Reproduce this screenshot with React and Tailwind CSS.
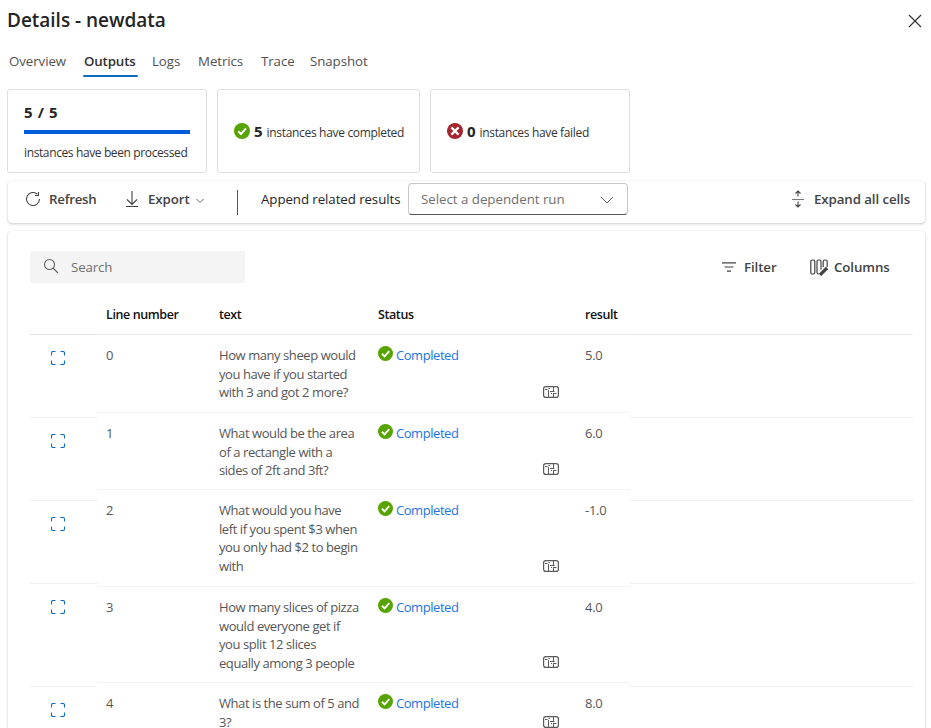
const FONT = "font-['Segoe_UI','Open_Sans','Noto_Sans',sans-serif]";

const tabs = [
  { label: 'Overview', cls: 'w-[59px]' },
  { label: 'Outputs', cls: 'w-[52px]', active: true },
  { label: 'Logs', cls: 'w-[30px]' },
  { label: 'Metrics', cls: 'w-[47px]' },
  { label: 'Trace', cls: 'w-[33px]' },
  { label: 'Snapshot', cls: 'w-[58px]' },
];

const rows = [
  { lines: ['How many sheep would', 'you have if you started', 'with 3 and got 2 more?'], result: '5.0', h: 'h-[78px]', side: 'h-[83px]' },
  { lines: ['What would be the area', 'of a rectangle with a', 'sides of 2ft and 3ft?'], result: '6.0', h: 'h-[77px]', side: 'h-[83px]' },
  { lines: ['What would you have', 'left if you spent $3 when', 'you only had $2 to begin', 'with'], result: '-1.0', h: 'h-[97px]', side: 'h-[83px]' },
  { lines: ['How many slices of pizza', 'would everyone get if', 'you split 12 slices', 'equally among 3 people'], result: '4.0', h: 'h-[96px]', side: 'h-[103px]' },
  { lines: ['What is the sum of 5 and', '3?'], result: '8.0', h: 'h-[60px]', side: 'h-[83px]' },
];

function Check({ className }) {
  return (
    <svg viewBox="0 0 16 16" className={`shrink-0 ${className}`}>
      <circle cx="8" cy="8" r="8" fill="#57a300" />
      <path d="M4.200 8.300 7 11l5-5.600" fill="none" stroke="#fff" strokeWidth="2" />
    </svg>
  );
}

function Failed() {
  return (
    <svg viewBox="0 0 16 16" className="size-4 shrink-0">
      <circle cx="8" cy="8" r="8" fill="#a4262c" />
      <path d="m4.400 4.400 7.200 7.200m0-7.200-7.200 7.200" stroke="#fff" strokeWidth="2.200" />
    </svg>
  );
}

function Corners() {
  return (
    <svg viewBox="0 0 14 14" className="size-[14px]" fill="none" stroke="#0f6cbd" strokeWidth="1.1">
      <path d="M.5 4.500V2Q.5.5 2 .5h2.500M9.500 .5H12q1.500 0 1.500 1.500v2.500M13.500 9.500V12q0 1.500-1.500 1.500H9.500M4.500 13.500H2Q.5 13.500 .5 12V9.500" />
    </svg>
  );
}

function TraceIcon() {
  return (
    <svg viewBox="0 0 16 12" className="h-3 w-4" fill="none" stroke="#5a5a5a" strokeWidth="1">
      <rect x=".6" y=".6" width="14.800" height="10.800" rx="2.200" strokeWidth="1.200" />
      <path d="M2 3.500h2.500M5.500 4v7M5.500 2.500H7M10.500 1v4M7 5.500h4.500M10.500 8v3M10 7.500h3.500M8 7.500h1" />
    </svg>
  );
}

function Completed() {
  return (
    <div className="flex pl-[15px] pt-[10px]">
      <Check className="mt-px size-[15px]" />
      <span className="ml-[3px] leading-5 tracking-[-0.45px] text-[#2474e5]">Completed</span>
    </div>
  );
}

export default function App() {
  return (
    <div className={`h-[728px] w-[931px] overflow-hidden bg-white text-[#242424] ${FONT}`}>
      <header className="flex h-[42px] justify-between pl-[7px] pr-[9px]">
        <h1 className="mt-[6px] text-[19px] font-semibold leading-7 tracking-[-0.02px]">Details - newdata</h1>
        <svg viewBox="0 0 14 14" className="mt-[14px] size-[14px]" stroke="#333" strokeWidth="1.2">
          <path d="m1 1 12 12m0-12L1 13" />
        </svg>
      </header>

      <nav className="flex h-[47px] gap-4 pl-[9px] text-[13.3px] text-[#505050]">
        {tabs.map((t) => (
          <div key={t.label} className={t.cls}>
            <div className={`mt-[9px] whitespace-nowrap leading-5 ${t.active ? 'font-semibold tracking-[-0.15px] text-[#303030]' : 'tracking-[-0.08px]'}`}>{t.label}</div>
            {t.active && <div className="-ml-px mt-[4px] h-[2px] w-[55px] rounded bg-[#0f6cbd]" />}
          </div>
        ))}
      </nav>

      <section className="flex h-[84px] gap-[10px] pl-[7px]">
        <div className="w-[200px] rounded-[3px] border border-[#dedede] px-4">
          <div className="mt-[12px] text-[15px] font-bold leading-5 tracking-[0.6px]">5 / 5</div>
          <div className="mt-[8px] h-1 w-[166px] bg-[#015cda]" />
          <div className="mt-[9px] whitespace-nowrap text-[12px] leading-5 tracking-[-0.38px] text-[#333]">instances have been processed</div>
        </div>
        <div className="flex w-[203px] items-center rounded-[3px] border border-[#dedede] px-4">
          <Check className="size-4" />
          <span className="ml-1 text-[15px] font-bold leading-5">5</span>
          <span className="ml-[4px] mt-[3px] whitespace-nowrap text-[12px] leading-5 tracking-[-0.32px] text-[#333]">instances have completed</span>
        </div>
        <div className="flex w-[200px] items-center rounded-[3px] border border-[#dedede] px-4">
          <Failed />
          <span className="ml-1 text-[15px] font-bold leading-5">0</span>
          <span className="ml-[4px] mt-[3px] whitespace-nowrap text-[12px] leading-5 tracking-[-0.34px] text-[#333]">instances have failed</span>
        </div>
      </section>

      <section className="ml-2 mt-2 flex h-[42px] w-[917px] items-start rounded-[4px] text-[13.3px] leading-5 shadow-[0_1px_3px_rgba(0,0,0,0.2),0_0_1px_rgba(0,0,0,0.12)]">
        <svg viewBox="0 0 16 16" className="ml-[17px] mt-[10px] size-4" fill="none" stroke="#424242" strokeWidth="1.1">
          <path d="M14.500 8A6.500 6.500 0 1 1 12.300 3.100M13.500 1v3.500H10" />
        </svg>
        <span className="ml-[8px] mt-[8px] w-[48px] whitespace-nowrap font-semibold tracking-[-0.25px] text-[#424242]">Refresh</span>
        <svg viewBox="0 0 14 16" className="ml-[28px] mt-[10px] h-4 w-[14px]" fill="none" stroke="#424242" strokeWidth="1.1">
          <path d="M7 0v13M2 8.500l5 5 5-5M1 15.500h12" />
        </svg>
        <span className="ml-[9px] mt-[8px] w-[43px] whitespace-nowrap font-semibold tracking-[-0.1px] text-[#424242]">Export</span>
        <svg viewBox="0 0 8 6" className="ml-[5px] mt-[17px] h-[6px] w-2" fill="none" stroke="#616161" strokeWidth="1">
          <path d="m.5 1 3.500 3.500L7.500 1" />
        </svg>
        <div className="ml-[33px] mt-[9px] h-[25px] w-px bg-[#555]" />
        <span className="ml-[23px] mt-[8px] w-[139px] whitespace-nowrap tracking-[-0.08px]">Append related results</span>
        <div className="ml-[8px] mt-[2px] flex h-8 w-[220px] justify-between rounded-[4px] border border-[#c9c9c9] border-b-[#555] pl-3 pr-[13px]">
          <span className="mt-[5px] whitespace-nowrap tracking-[-0.02px] text-[#707070]">Select a dependent run</span>
          <svg viewBox="0 0 14 8" className="mt-[12px] h-2 w-[14px]" fill="none" stroke="#616161" strokeWidth="1">
            <path d="m1 1 6 6 6-6" />
          </svg>
        </div>
        <svg viewBox="0 0 12 18" className="ml-[164px] mt-[9px] h-[18px] w-3" fill="none" stroke="#424242" strokeWidth="1.1">
          <path d="M0 9.500h12" stroke="#777" />
          <path d="M6 6.500V1M3.500 3.500 6 1l2.500 2.500M6 11.500v5.500M3.500 14.500 6 17l2.500-2.500" />
        </svg>
        <span className="ml-[10px] mt-[8px] whitespace-nowrap font-semibold tracking-[-0.1px] text-[#424242]">Expand all cells</span>
      </section>

      <section className="ml-2 mt-2 h-[520px] w-[917px] rounded-[4px] px-[22px] text-[13.3px] shadow-[0_1px_3px_rgba(0,0,0,0.2),0_0_1px_rgba(0,0,0,0.12)]">
        <div className="flex items-start pt-5 leading-5">
          <div className="flex h-8 w-[215px] rounded-[3px] bg-[#f4f4f4]">
            <svg viewBox="0 0 16 16" className="ml-[13px] mt-[7px] size-4" fill="none" stroke="#616161" strokeWidth="1.1">
              <circle cx="6.500" cy="6.500" r="5" />
              <path d="m10 10 5 5" />
            </svg>
            <span className="ml-[12px] mt-[6px] text-[#707070] tracking-[-0.15px]">Search</span>
          </div>
          <svg viewBox="0 0 14 10" className="ml-[477px] mt-[11px] h-[10px] w-[14px]" stroke="#424242" strokeWidth="1.2">
            <path d="M0 .8h14M2.500 5h9M5 9.200h4" />
          </svg>
          <span className="ml-[8px] mt-[6px] w-[34px] whitespace-nowrap font-semibold tracking-[-0.1px] text-[#424242]">Filter</span>
          <svg viewBox="0 0 18 17" className="ml-[32px] mt-[8px] h-[17px] w-[18px]" fill="none" stroke="#424242" strokeWidth="1.2">
            <rect x=".8" y="1" width="4" height="14" rx="1.500" />
            <path d="M9 15H8.500Q7 15 7 13.500v-11Q7 1 8.500 1h1Q11 1 11 2.500v8M13.200 8V2.500Q13.200 1 14.500 1h1.200Q17.200 1 17.200 2.500V8" />
            <path d="m10 16 7-7" strokeWidth="3.200" />
          </svg>
          <span className="ml-[6px] mt-[6px] whitespace-nowrap font-semibold tracking-[-0.1px] text-[#424242]">Columns</span>
        </div>

        <div className="mt-[5px] flex text-[13px] text-[#565656]">
          <div className="w-[67px] shrink-0">
            <div className="h-[47px] border-b border-[#e3e3e3]" />
            {rows.map((r, i) => (
              <div key={i} className={`${r.side} border-b border-[#efefef] pl-[21px] pt-[16px]`}>
                <Corners />
              </div>
            ))}
          </div>
          <div className="w-[533px] shrink-0">
            <div className="flex h-[47px] border-b border-[#eaeaea] pt-[17px] text-[12.5px] font-semibold leading-5 tracking-[-0.4px] text-[#111]">
              <div className="w-[112px] pl-[9px]">Line number</div>
              <div className="w-[159px] pl-[10px]">text</div>
              <div className="w-[207px] pl-[10px]">Status</div>
              <div className="pl-[10px]">result</div>
            </div>
            {rows.map((r, i) => (
              <div key={i} className={`flex ${r.h} border-b border-[#f3f3f3]`}>
                <div className="w-[112px] pl-[9px] pt-[10px] leading-5">{i}</div>
                <div className="w-[154px] whitespace-nowrap pl-[10px] pt-[11px] leading-[18.700px] tracking-[-0.43px]">
                  {r.lines.map((l) => (
                    <div key={l}>{l}</div>
                  ))}
                </div>
                <div className="flex w-[196px] justify-between">
                  <Completed />
                  <div className="flex items-end pb-[14px]">
                    <TraceIcon />
                  </div>
                </div>
                <div className="pl-[26px] pt-[10px] leading-5 tracking-[-0.3px]">{r.result}</div>
              </div>
            ))}
          </div>
          <div className="w-[283px] shrink-0">
            <div className="h-[47px] border-b border-[#e8e8e8]" />
            {rows.map((r, i) => (
              <div key={i} className={`${r.side} border-b border-[#efefef]`} />
            ))}
          </div>
        </div>
      </section>
    </div>
  );
}
